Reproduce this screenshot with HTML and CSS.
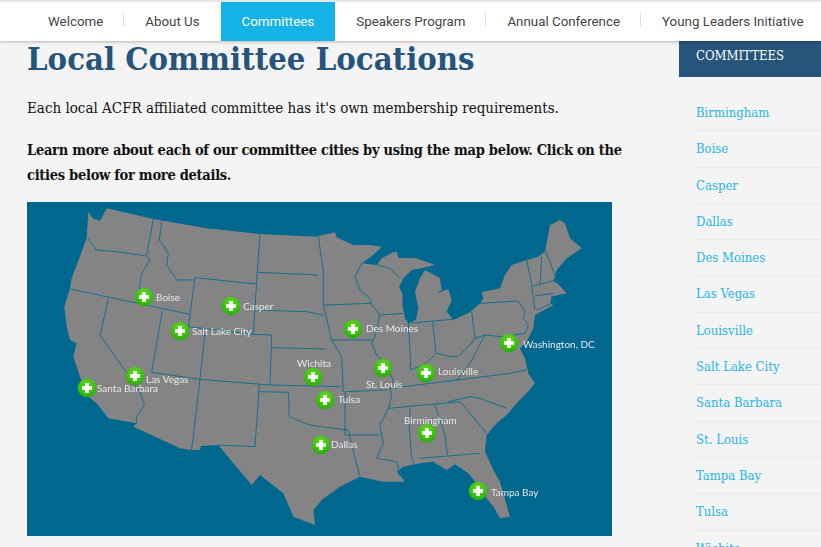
FILE: index.html
```html
<!DOCTYPE html>
<html lang="en">
<head>
<meta charset="utf-8">
<title>Local Committee Locations</title>
<link rel="stylesheet" href="styles.css">
</head>
<body>
<nav class="topnav">
  <ul class="topnav-list">
    <li class="topnav-item sep"><a>Welcome</a></li>
    <li class="topnav-item"><a>About Us</a></li>
    <li class="topnav-item active"><a>Committees</a></li>
    <li class="topnav-item sep"><a>Speakers Program</a></li>
    <li class="topnav-item sep"><a>Annual Conference</a></li>
    <li class="topnav-item"><a>Young Leaders Initiative</a></li>
  </ul>
</nav>
<div class="page">
  <main class="content">
    <h1 class="title">Local Committee Locations</h1>
    <p class="lead">Each local ACFR affiliated committee has it's own membership requirements.</p>
    <p class="strong">Learn more about each of our committee cities by using the map below. Click on the cities below for more details.</p>
    <svg class="map" viewBox="27 202 585 334" width="585" height="334" role="img" aria-label="Map of committee cities">
      <defs>
        <radialGradient id="pinfill" cx="50%" cy="30%" r="75%">
          <stop offset="0" stop-color="#62d81e"/>
          <stop offset="0.7" stop-color="#38bb10"/>
          <stop offset="1" stop-color="#27a10c"/>
        </radialGradient>
        <g id="pin">
          <circle r="9.3" fill="url(#pinfill)"/>
          <path d="M-1.8-5h3.6v3.2h3.2v3.6h-3.2v3.2h-3.6v-3.2h-3.2v-3.6h3.2z" fill="#fff"/>
        </g>
      </defs>
      <rect x="27" y="202" width="585" height="334" fill="#00688f"/>
      <g transform="translate(20 200) scale(.33333)">
        <path class="land" d="M205,35 L218,55 240,62 250,45 260,25 400,57 560,85 720,102 890,110 895,108 945,97 950,112 1000,135 1050,135 1085,140 1060,165 1025,190 1070,195 1085,175 1120,157 1130,155 1135,173 1190,175 1245,195 1210,203 1175,210 1150,235 1138,260 1148,285 1147,315 1155,355 1165,370 1188,360 1195,325 1185,275 1200,235 1215,210 1260,235 1265,270 1252,280 1285,267 1295,300 1280,335 1300,360 1350,337 1380,310 1390,295 1385,277 1440,265 1455,225 1475,195 1520,180 1555,170 1575,155 1590,75 1620,60 1635,70 1650,115 1685,145 1640,175 1610,210 1600,245 1612,250 1640,280 1615,285 1595,290 1590,310 1600,315 1545,345 1540,385 1520,425 1500,445 1515,475 1525,520 1545,550 1520,580 1490,610 1460,645 1430,670 1400,705 1395,755 1420,810 1440,845 1470,950 1440,955 1420,920 1400,895 1370,850 1345,820 1305,793 1280,810 1240,785 1200,790 1150,800 1130,815 1155,845 1090,845 1020,830 960,860 905,900 880,930 885,975 820,950 790,880 720,825 695,855 640,790 595,735 543,738 540,750 515,750 480,745 340,680 350,670 265,655 230,610 205,590 180,530 160,470 170,430 150,420 140,380 133,320 150,265 155,235 200,115 Z"/>
        <path class="borders" d="M203,115 L230,150 290,155 380,168 390,180 365,220 352,300
          M150,267 L510,343 M400,57 L380,165
          M425,65 L418,120 445,160 440,195 470,240 520,240
          M525,233 L710,252 M720,102 L712,215 700,403 M715,217 L895,225
          M525,233 L505,380 700,403 755,405 750,555
          M427,332 L395,517 540,538 750,555 965,560
          M555,400 L540,538 515,750
          M265,298 L240,405 360,575 373,615 350,650 350,670
          M705,330 L860,335 910,345 M755,443 L915,447
          M718,555 L705,740 595,735
          M718,575 L805,577 808,650 860,672 900,680 985,690 1005,775 1020,830
          M895,110 L910,215 910,315 935,420 965,470 970,575
          M910,315 L1055,310
          M935,420 L1060,420
          M975,575 L1105,570
          M1080,345 L1070,390 1060,420 1055,430 1070,465 1090,485 1120,540 1110,565 1115,590 1105,625 1080,675 1090,730 1070,775 1130,785 1135,805 1155,845
          M975,575 L975,705 1080,705
          M1105,625 L1320,605
          M1110,565 L1470,520 1520,510
          M1170,625 L1168,685 1175,775 1185,795
          M1245,615 L1275,705 1282,765
          M1200,775 L1380,760
          M1320,605 L1400,700
          M1285,605 L1350,590 1380,595 1460,625
          M1025,190 L1005,230 1020,270 1050,295 1055,315 1080,345 1150,340
          M1070,195 L1110,205 1140,235
          M1165,370 L1172,485 1170,510 1210,495 1250,460 1290,470 1315,470 1350,435 1365,415 1395,405 1445,410 1515,400
          M1238,363 L1248,460
          M1165,370 L1238,363 1300,358
          M1355,335 L1365,415
          M1310,540 L1350,490 1395,405
          M1380,310 L1495,303 1515,335 1510,355 1525,375 1515,400
          M1520,180 L1535,255 1545,330
          M1565,170 L1560,255
          M1578,155 L1608,235
          M1540,258 L1608,240
          M1545,288 L1600,280
          M1595,285 L1600,310
          M1550,330 L1595,310"/>
      </g>
      <g class="labels">
        <use href="#pin" x="144" y="297"/><text x="156" y="301">Boise</text>
        <use href="#pin" x="231" y="306"/><text x="243" y="310">Casper</text>
        <use href="#pin" x="180" y="331"/><text x="192" y="335">Salt Lake City</text>
        <use href="#pin" x="135" y="376"/><text x="146" y="383">Las Vegas</text>
        <use href="#pin" x="87" y="388"/><text x="97" y="392">Santa Barbara</text>
        <use href="#pin" x="313" y="377"/><text x="297" y="367">Wichita</text>
        <use href="#pin" x="325" y="400"/><text x="338" y="403">Tulsa</text>
        <use href="#pin" x="321" y="445"/><text x="331" y="448">Dallas</text>
        <use href="#pin" x="353" y="329"/><text x="366" y="332">Des Moines</text>
        <use href="#pin" x="383" y="368"/><text x="366" y="388">St. Louis</text>
        <use href="#pin" x="426" y="373"/><text x="438" y="375">Louisville</text>
        <use href="#pin" x="427" y="433"/><text x="404" y="424">Birmingham</text>
        <use href="#pin" x="509" y="343"/><text x="523" y="348">Washington, DC</text>
        <use href="#pin" x="478" y="491"/><text x="491" y="496">Tampa Bay</text>
      </g>
    </svg>
  </main>
  <aside class="sidebar">
    <h2 class="side-head">COMMITTEES</h2>
    <ul class="side-list">
      <li>Birmingham</li>
      <li>Boise</li>
      <li>Casper</li>
      <li>Dallas</li>
      <li>Des Moines</li>
      <li>Las Vegas</li>
      <li>Louisville</li>
      <li>Salt Lake City</li>
      <li>Santa Barbara</li>
      <li>St. Louis</li>
      <li>Tampa Bay</li>
      <li>Tulsa</li>
      <li>Wichita</li>
    </ul>
  </aside>
</div>
</body>
</html>
```
FILE: styles.css
```css
html, body {
  margin: 0;
  height: 547px;
  overflow: hidden;
  background: #f4f4f4;
}
body {
  font-family: "DejaVu Serif Condensed", "DejaVu Serif", serif;
  color: #111;
}
.topnav {
  height: 39px;
  background: #fff;
  border-top: 2px solid #e6e6e6;
  box-shadow: 0 1px 3px rgba(0, 0, 0, .25);
  position: relative;
  z-index: 2;
}
.topnav-list {
  display: flex;
  margin: 0;
  padding: 0 0 0 27px;
  list-style: none;
  white-space: nowrap;
  font: 13.33px/39px Roboto, sans-serif;
  color: #444;
}
.topnav-item {
  position: relative;
  padding: 0 21px;
}
.topnav-item.sep::after {
  content: "";
  position: absolute;
  right: 0;
  top: 11px;
  height: 13px;
  width: 1px;
  background: #ddd;
}
.topnav-item.active {
  background: #16b3e6;
  color: #fff;
}
.page {
  display: flex;
}
.content {
  width: 652px;
  padding-left: 27px;
  box-sizing: border-box;
}
.title {
  margin: 0;
  font-size: 32.55px;
  line-height: 35px;
  font-weight: 700;
  color: #27547a;
}
.lead, .strong {
  margin: 0;
  font-size: 15px;
  line-height: 25px;
}
.lead {
  margin-top: 20px;
}
.strong {
  margin-top: 16px;
  margin-bottom: 15px;
  font-size: 14.5px;
  letter-spacing: -.28px;
  font-weight: 700;
  width: 600px;
}
.map {
  display: block;
  filter: blur(.4px);
}
.land {
  fill: #848484;
}
.borders {
  fill: none;
  stroke: #14708f;
  stroke-width: 3;
  stroke-linejoin: round;
}
.labels text {
  font: 10px Lato, sans-serif;
  fill: #e8e8e8;
}
.sidebar {
  width: 142px;
  margin-left: 27px;
  flex: none;
}
.side-head {
  margin: 0;
  height: 36px;
  padding: 6px 0 0 17px;
  box-sizing: border-box;
  background: #27547a;
  color: #fff;
  font-size: 13px;
  line-height: 17px;
  font-weight: 400;
}
.side-list {
  margin: 18px 0 0 17px;
  padding: 0;
  list-style: none;
  font-size: 13px;
  color: #29b5e8;
}
.side-list li {
  height: 36.3px;
  line-height: 36px;
  box-sizing: border-box;
  border-bottom: 1px solid #ebebeb;
}
```
